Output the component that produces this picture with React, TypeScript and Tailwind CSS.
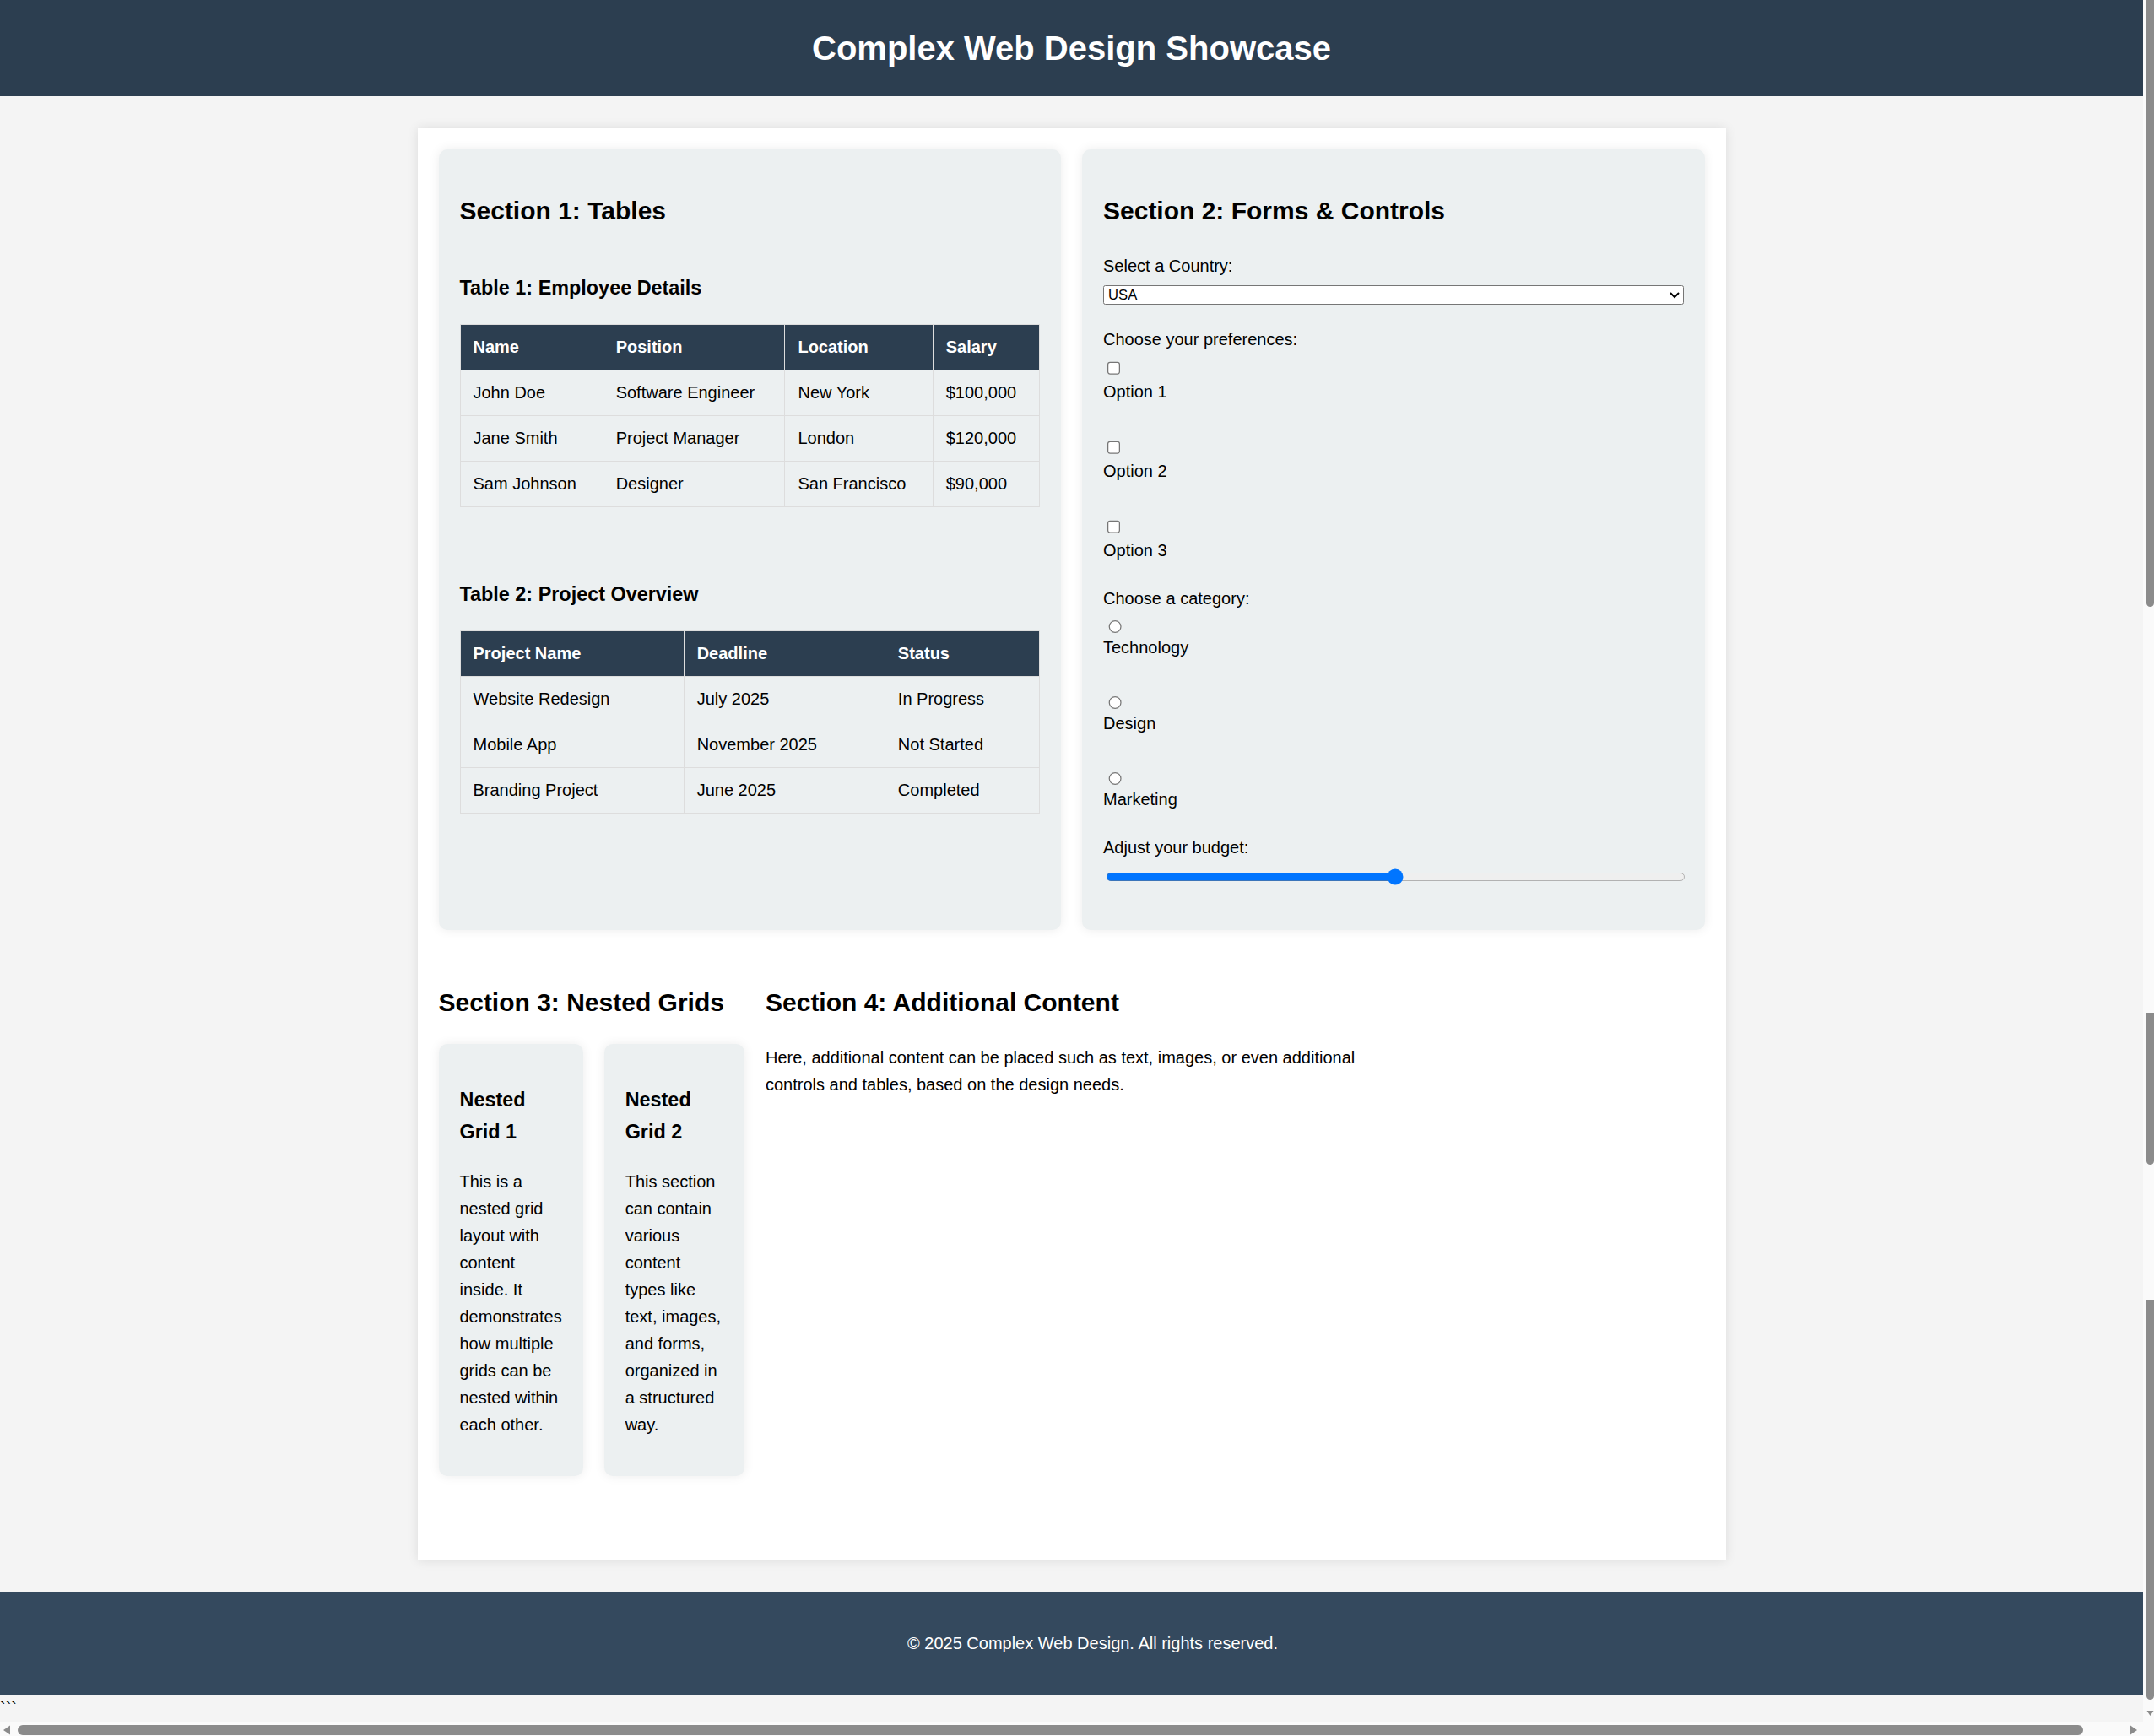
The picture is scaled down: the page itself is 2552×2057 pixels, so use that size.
import React from "react";

const employees = [
  ["John Doe", "Software Engineer", "New York", "$100,000"],
  ["Jane Smith", "Project Manager", "London", "$120,000"],
  ["Sam Johnson", "Designer", "San Francisco", "$90,000"],
];

const projects = [
  ["Website Redesign", "July 2025", "In Progress"],
  ["Mobile App", "November 2025", "Not Started"],
  ["Branding Project", "June 2025", "Completed"],
];

function DataTable({ head, rows }: { head: string[]; rows: string[][] }) {
  return (
    <table className="w-full border-collapse">
      <thead>
        <tr className="h-[43.2px]">
          {head.map((h) => (
            <th
              key={h}
              className="border border-[#ddd] bg-[#2c3e50] px-[12px] py-[8px] text-left font-bold text-white"
            >
              {h}
            </th>
          ))}
        </tr>
      </thead>
      <tbody>
        {rows.map((r) => (
          <tr key={r[0]} className="h-[43.2px]">
            {r.map((c, i) => (
              <td key={i} className="border border-[#ddd] px-[12px] py-[8px] text-left">
                {c}
              </td>
            ))}
          </tr>
        ))}
      </tbody>
    </table>
  );
}

export default function App() {
  return (
    <div className="flex h-[2057px] w-[2552px] flex-col overflow-hidden bg-[#f4f4f4] [font-family:'Liberation_Sans',Arial,sans-serif]">
      <div className="flex">
        {/* page, rendered at 125% */}
        <div className="w-[2031.2px] shrink-0 bg-[#f4f4f4] text-[16px] leading-[1.6] text-black [zoom:1.25]">
          <header className="bg-[#2c3e50] py-[20px] text-center text-white">
            <h1 className="text-[32px] font-bold leading-[1.6]">Complex Web Design Showcase</h1>
          </header>

          <main className="mx-auto my-[30px] w-[1240px] bg-white p-[20px] shadow-[0_0_10px_rgba(0,0,0,0.1)]">
            <div className="grid grid-cols-2 gap-[20px]">
              {/* Section 1 */}
              <section className="flex flex-col rounded-[8px] bg-[#ecf0f1] p-[20px] shadow-[0_0_10px_rgba(0,0,0,0.08)]">
                <h2 className="my-[19.92px] text-[24px] font-bold leading-[1.6]">Section 1: Tables</h2>
                <h3 className="my-[18.72px] text-[18.72px] font-bold leading-[1.6]">Table 1: Employee Details</h3>
                <DataTable head={["Name", "Position", "Location", "Salary"]} rows={employees} />
                <h3 className="mb-[18.72px] mt-[68.4px] text-[18.72px] font-bold leading-[1.6]">
                  Table 2: Project Overview
                </h3>
                <DataTable head={["Project Name", "Deadline", "Status"]} rows={projects} />
              </section>

              {/* Section 2 */}
              <section className="flex flex-col rounded-[8px] bg-[#ecf0f1] p-[20px] shadow-[0_0_10px_rgba(0,0,0,0.08)]">
                <h2 className="my-[19.92px] text-[24px] font-bold leading-[1.6]">Section 2: Forms &amp; Controls</h2>
                <label htmlFor="country" className="mb-[5px]">Select a Country:</label>
                <select
                  id="country"
                  defaultValue="usa"
                  className="mb-[20px] h-[19px] w-full rounded-[2px] border border-[#767676] bg-white text-[13.333px] leading-[normal]"
                >
                  <option value="usa">USA</option>
                  <option value="canada">Canada</option>
                  <option value="uk">UK</option>
                  <option value="australia">Australia</option>
                </select>

                <label className="mb-[5px]">Choose your preferences:</label>
                <input type="checkbox" id="o1" className="mb-[3px] ml-[4px] mr-[3px] mt-[3px] h-[13px] w-[13px] self-start" />
                <label htmlFor="o1" className="mb-[30.6px]">Option 1</label>
                <input type="checkbox" id="o2" className="mb-[3px] ml-[4px] mr-[3px] mt-[3px] h-[13px] w-[13px] self-start" />
                <label htmlFor="o2" className="mb-[30.6px]">Option 2</label>
                <input type="checkbox" id="o3" className="mb-[3px] ml-[4px] mr-[3px] mt-[3px] h-[13px] w-[13px] self-start" />
                <label htmlFor="o3" className="mb-[19.5px]">Option 3</label>

                <label className="mb-[5px]">Choose a category:</label>
                <input type="radio" name="cat" id="r1" className="ml-[5px] mr-[3px] mt-[3px] h-[13px] w-[13px] self-start" />
                <label htmlFor="r1" className="mb-[30.6px]">Technology</label>
                <input type="radio" name="cat" id="r2" className="ml-[5px] mr-[3px] mt-[3px] h-[13px] w-[13px] self-start" />
                <label htmlFor="r2" className="mb-[30.6px]">Design</label>
                <input type="radio" name="cat" id="r3" className="ml-[5px] mr-[3px] mt-[3px] h-[13px] w-[13px] self-start" />
                <label htmlFor="r3" className="mb-[19.5px]">Marketing</label>

                <label htmlFor="budget" className="mb-[5px]">Adjust your budget:</label>
                <input
                  type="range"
                  id="budget"
                  min={0}
                  max={100}
                  defaultValue={50}
                  className="mb-[22.5px] ml-[2px] mt-[2px] h-[16px] w-full"
                />
              </section>
            </div>

            <div className="mt-[30px] grid grid-cols-[290px_590px] gap-[20px] pb-[60px]">
              {/* Section 3 */}
              <section>
                <h2 className="my-[19.92px] text-[24px] font-bold leading-[1.6]">Section 3: Nested Grids</h2>
                <div className="grid grid-cols-[1fr_1fr] gap-[20px]">
                  <div className="rounded-[8px] bg-[#ecf0f1] p-[20px] shadow-[0_0_10px_rgba(0,0,0,0.08)]">
                    <h3 className="my-[18.72px] text-[18.72px] font-bold leading-[1.6]">Nested Grid 1</h3>
                    <p className="my-[16px]">
                      This is a nested grid layout with content inside. It demonstrates how multiple grids can be
                      nested within each other.
                    </p>
                  </div>
                  <div className="rounded-[8px] bg-[#ecf0f1] p-[20px] shadow-[0_0_10px_rgba(0,0,0,0.08)]">
                    <h3 className="my-[18.72px] text-[18.72px] font-bold leading-[1.6]">Nested Grid 2</h3>
                    <p className="my-[16px]">
                      This section can contain various content types like text, images, and forms, organized in a
                      structured way.
                    </p>
                  </div>
                </div>
              </section>

              {/* Section 4 */}
              <section>
                <h2 className="my-[19.92px] text-[24px] font-bold leading-[1.6]">Section 4: Additional Content</h2>
                <p className="my-[16px]">
                  Here, additional content can be placed such as text, images, or even additional controls and tables,
                  based on the design needs.
                </p>
              </section>
            </div>
          </main>

          <footer className="bg-[#34495e] pb-[20px] pl-[40px] pt-[20px] text-center text-white">
            <p className="my-[16px]">&copy; 2025 Complex Web Design. All rights reserved.</p>
          </footer>
          <div>```</div>
        </div>

        {/* vertical scrollbar strip (stitched screenshot) */}
        <div className="flex h-[2040px] flex-1 flex-col items-end bg-[#fafafa]">
          <div className="h-[719px] w-[9px] rounded-b-[5px] bg-[#8b8b8b]" />
          <div className="h-[481px]" />
          <div className="h-[180px] w-[9px] rounded-b-[5px] bg-[#8b8b8b]" />
          <div className="h-[160px]" />
          <div className="h-[474px] w-[9px] rounded-b-[5px] bg-[#8b8b8b]" />
          <svg width="9" height="8" viewBox="0 0 9 8" className="mt-[12px]">
            <polygon points="0.5,1 8.5,1 4.5,7" fill="#8b8b8b" />
          </svg>
        </div>
      </div>

      {/* horizontal scrollbar */}
      <div className="flex h-[17px] items-start bg-[#fafafa]">
        <svg width="10" height="12" viewBox="0 0 10 12" className="ml-[3px] mt-[4px]">
          <polygon points="9,0.5 9,11.5 1,6" fill="#8b8b8b" />
        </svg>
        <div className="ml-[8px] mt-[4px] h-[12px] w-[2447px] rounded-full bg-[#8b8b8b]" />
        <svg width="10" height="12" viewBox="0 0 10 12" className="ml-[55px] mt-[4px]">
          <polygon points="1,0.5 1,11.5 9,6" fill="#8b8b8b" />
        </svg>
      </div>
    </div>
  );
}
